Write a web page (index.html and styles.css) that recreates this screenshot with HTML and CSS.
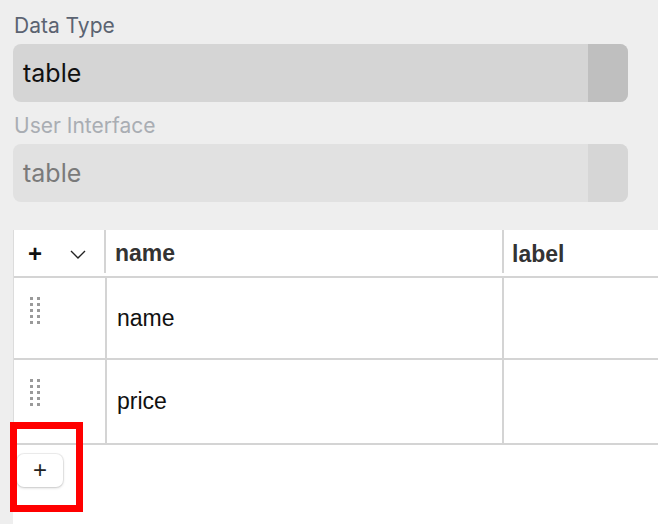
FILE: index.html
```html
<!DOCTYPE html>
<html lang="en">
<head>
    <meta charset="UTF-8">
    <meta name="viewport" content="width=device-width, initial-scale=1.0">
    <title>Field Settings</title>
    <link rel="stylesheet" href="styles.css">
</head>
<body>
    <div class="panel">
        <div class="field">
            <label class="field-label">Data Type</label>
            <div class="select">
                <span class="select-value">table</span>
                <span class="select-arrow"></span>
            </div>
        </div>
        <div class="field disabled">
            <label class="field-label">User Interface</label>
            <div class="select">
                <span class="select-value">table</span>
                <span class="select-arrow"></span>
            </div>
        </div>
    </div>

    <div class="table-wrap">
        <div class="grid">
            <div class="row head">
                <div class="cell tools">
                    <span class="tool-plus">+</span>
                    <svg class="tool-chevron" width="16" height="9" viewBox="0 0 16 9">
                        <path d="M1 1 L8 8 L15 1" fill="none" stroke="#222" stroke-width="1.4"/>
                    </svg>
                </div>
                <div class="cell col-name">name</div>
                <div class="cell col-label">label</div>
            </div>
            <div class="row body">
                <div class="cell tools"><span class="handle"></span></div>
                <div class="cell col-name">name</div>
                <div class="cell col-label"></div>
            </div>
            <div class="row body tall">
                <div class="cell tools"><span class="handle"></span></div>
                <div class="cell col-name">price</div>
                <div class="cell col-label"></div>
            </div>
        </div>
        <div class="table-foot">
            <button class="add-btn">+</button>
        </div>
    </div>

    <div class="highlight"></div>
</body>
</html>
```

FILE: styles.css
```css
body {
    margin: 0;
    height: 524px;
    background-color: #eeeeee;
    font-family: Inter, "Noto Sans", sans-serif;
    overflow: hidden;
}
.panel {
    padding: 12px 30px 0 13px;
}
.field {
    display: flex;
    flex-direction: column;
    gap: 4px;
    margin-bottom: 10px;
}
.field-label {
    font-size: 21px;
    line-height: 28px;
    color: #5b6371;
    padding-left: 1px;
}
.select {
    display: flex;
    height: 58px;
    border-radius: 8px;
    overflow: hidden;
    background-color: #d5d5d5;
}
.select-value {
    flex: 1;
    display: flex;
    align-items: center;
    padding-left: 10px;
    font-size: 25px;
    color: #111;
}
.select-arrow {
    width: 40px;
    background-color: #bfbfbf;
}
.field.disabled .field-label {
    color: #a9adb3;
}
.field.disabled .select {
    background-color: #e1e1e1;
}
.field.disabled .select-value {
    color: #7a7a7a;
}
.field.disabled .select-arrow {
    background-color: #d6d6d6;
}

.table-wrap {
    margin-top: 28px;
    margin-left: 13px;
    background: #fff;
    height: 294px;
    font-family: "Liberation Sans", Arial, sans-serif;
}
.grid {
    border-left: 1px solid #dcdcdc;
}
.row {
    display: flex;
    border-bottom: 2px solid #d4d4d4;
}
.row.head {
    height: 46px;
    align-items: flex-start;
}
.row.body {
    height: 80px;
}
.row.body.tall {
    height: 83px;
}
.cell {
    box-sizing: border-box;
    display: flex;
    align-items: center;
}
.tools {
    width: 92px;
    border-right: 2px solid #d4d4d4;
}
.head .tools {
    height: 43px;
    padding: 4px 0 0 14px;
    gap: 28px;
}
.body .tools {
    width: 93px;
    align-items: flex-start;
    padding: 19px 0 0 16px;
}
.col-name {
    width: 397px;
    padding-left: 10px;
    border-right: 2px solid #d4d4d4;
    font-size: 23px;
    color: #111;
}
.head .col-name {
    width: 398px;
    height: 43px;
    padding: 4px 0 0 9px;
    font-weight: bold;
    color: #333;
}
.col-label {
    flex: 1;
    padding-left: 8px;
    font-size: 23px;
    font-weight: bold;
    color: #333;
}
.head .col-label {
    height: 46px;
    padding-top: 2px;
}
.tool-plus {
    font-size: 24px;
    font-weight: bold;
    color: #111;
    line-height: 1;
}
.tool-chevron {
    margin-top: 2px;
}
.handle {
    width: 10px;
    height: 27px;
    background:
        linear-gradient(#9a9a9a, #9a9a9a) 0 0 / 3px 100% no-repeat,
        linear-gradient(#9a9a9a, #9a9a9a) 7px 0 / 3px 100% no-repeat;
    -webkit-mask: repeating-linear-gradient(#000 0 3px, transparent 3px 6px);
    mask: repeating-linear-gradient(#000 0 3px, transparent 3px 6px);
}
.table-foot {
    padding: 9px 0 0 4px;
}
.add-btn {
    width: 46px;
    height: 33px;
    border: none;
    border-radius: 7px;
    background: #fff;
    box-shadow: 0 0 0 1px rgba(0, 0, 0, 0.06), 0 1px 3px rgba(0, 0, 0, 0.18);
    font-family: "Liberation Sans", Arial, sans-serif;
    font-size: 24px;
    color: #222;
    line-height: 1;
    padding: 0 0 2px;
}
.highlight {
    position: absolute;
    left: 10px;
    top: 422px;
    width: 73px;
    height: 90px;
    box-sizing: border-box;
    border: 7px solid #ff0000;
}
```
